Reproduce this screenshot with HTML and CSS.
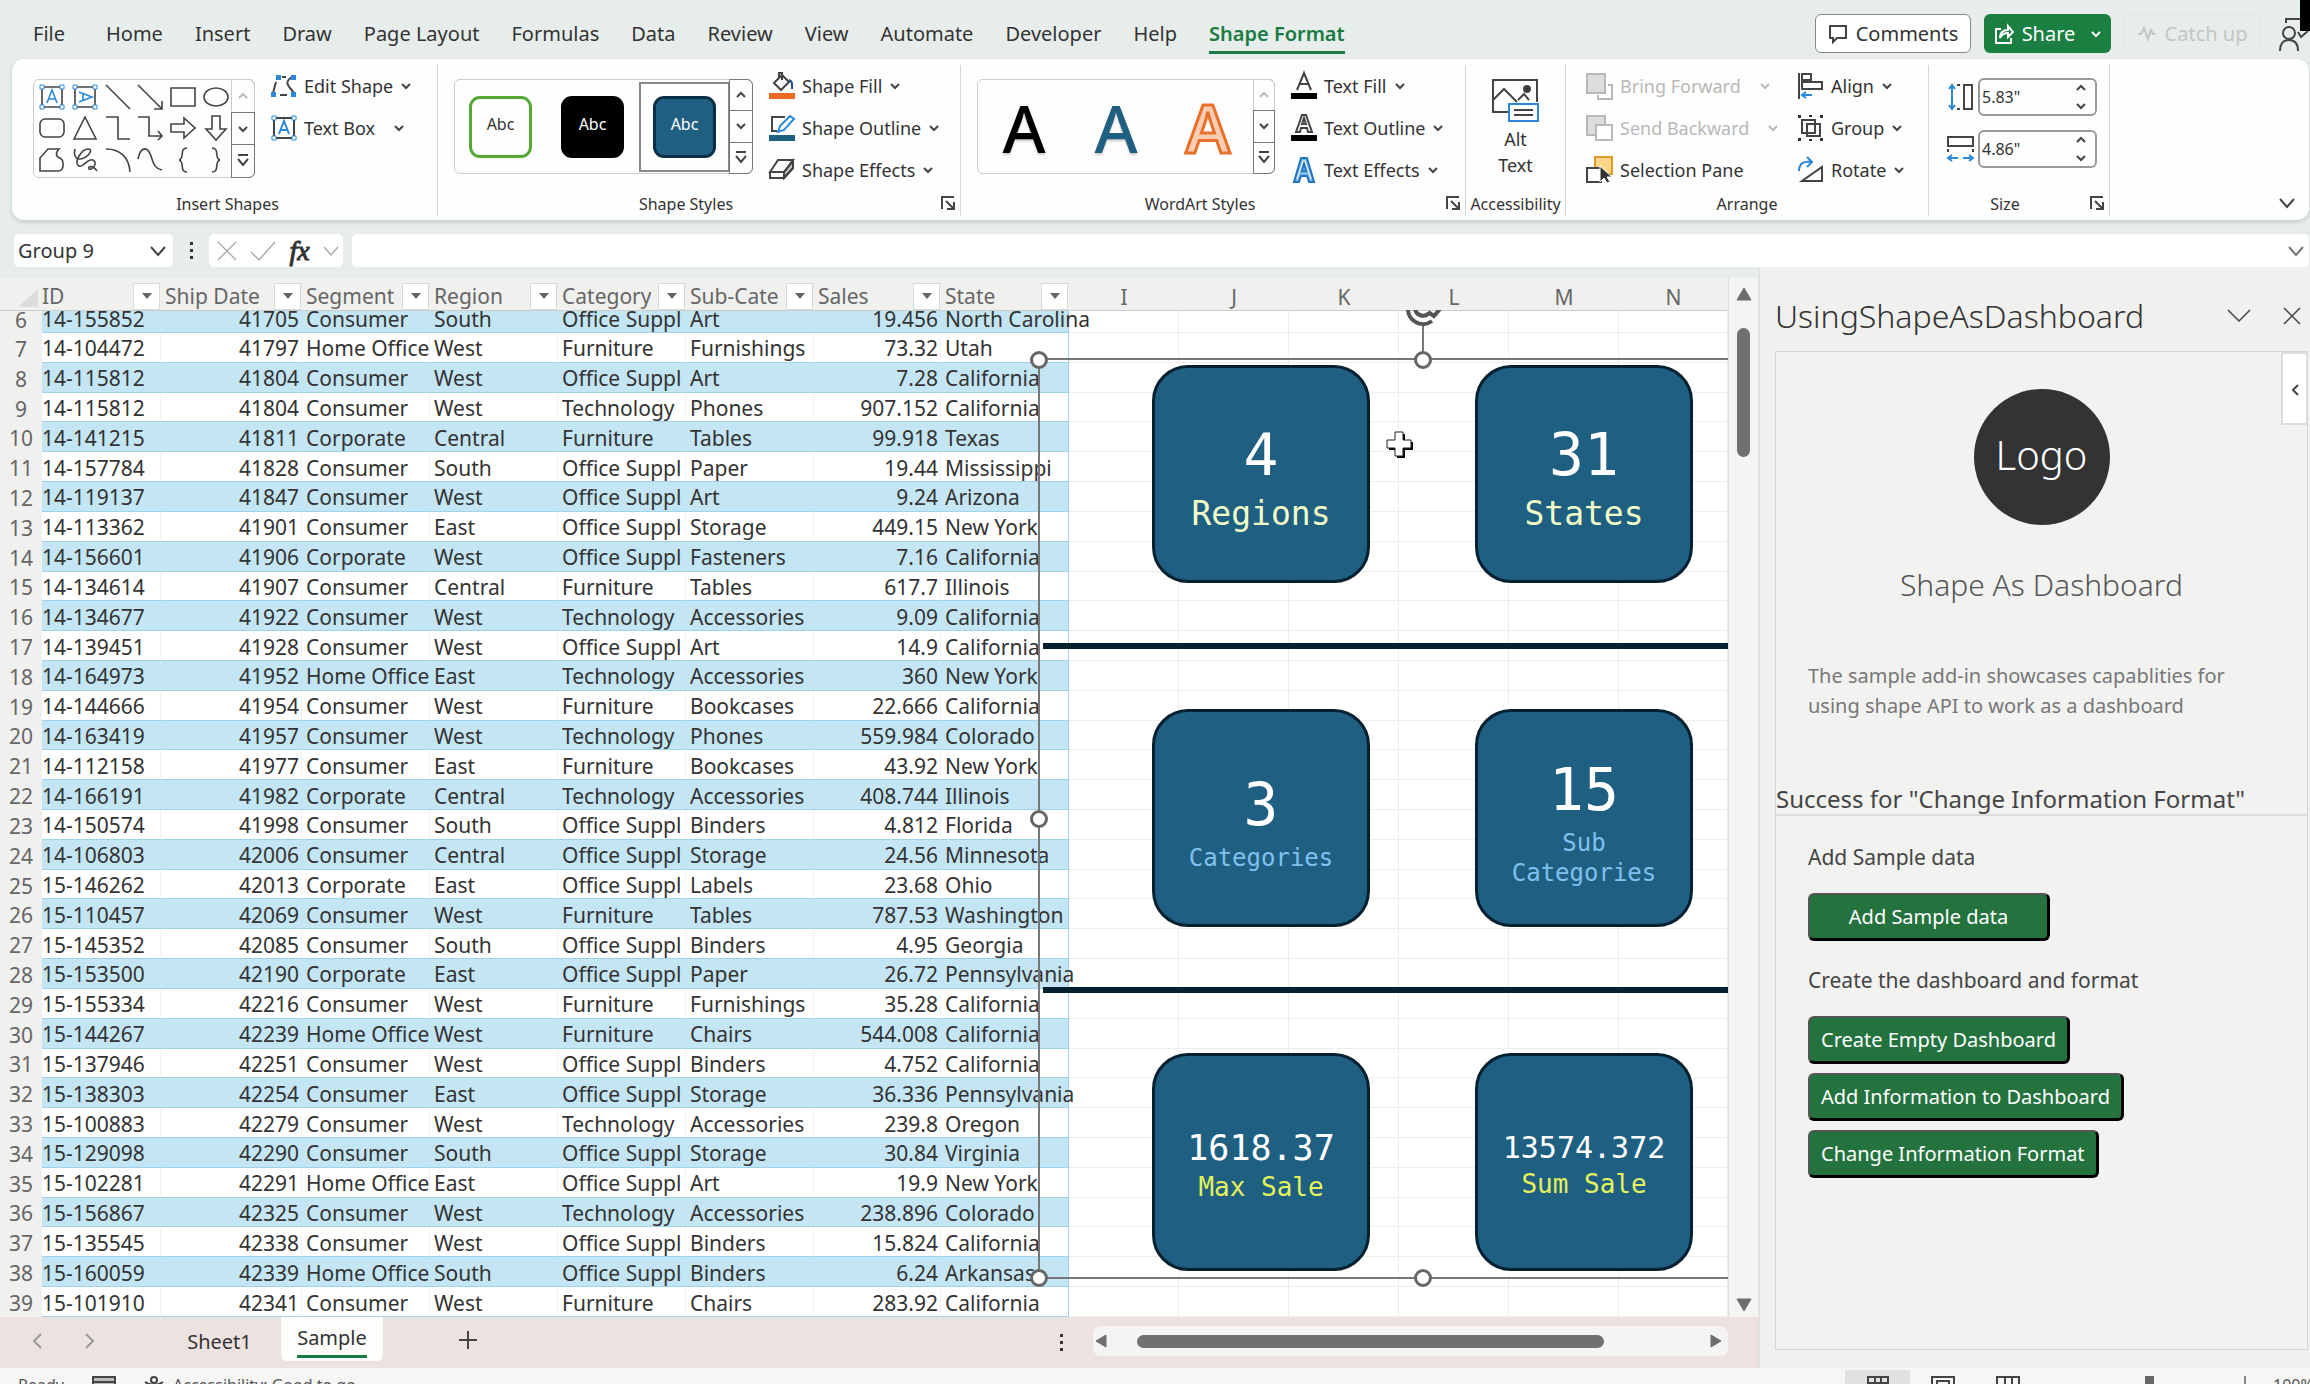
FILE: index.html
```
<!DOCTYPE html>
<html lang="en">
<head>
<meta charset="utf-8">
<title>Sample - Excel</title>
<link rel="stylesheet" href="styles.css">
</head>
<body>
<svg class="defs" aria-hidden="true">
  <symbol id="chev" viewBox="0 0 10 8"><path d="M1 2l4 4 4-4"/></symbol>
  <symbol id="chev-up" viewBox="0 0 10 8"><path d="M1 6l4-4 4 4"/></symbol>
  <symbol id="more" viewBox="0 0 12 16"><path d="M1 2h10M1 6l5 6 5-6"/></symbol>
  <symbol id="launch" viewBox="0 0 14 14"><path d="M1 13V1h12M5 5l8 8M13 6v7H6"/></symbol>
  <symbol id="textbox" viewBox="0 0 26 26"><path d="M3 3h20v20H3z"/><path class="blue" d="M8 19l5-13 5 13M10 15h6"/><path class="dot" d="M1 1h4v4H1zM21 1h4v4h-4zM1 21h4v4H1zM21 21h4v4h-4z"/></symbol>
</svg>
<div class="app">
  <header class="tabs-bar">
    <nav class="tabs">
      <a href="#" class="file">File</a><a href="#">Home</a><a href="#">Insert</a><a href="#">Draw</a><a href="#">Page Layout</a><a href="#">Formulas</a><a href="#">Data</a><a href="#">Review</a><a href="#">View</a><a href="#">Automate</a><a href="#">Developer</a><a href="#">Help</a><a href="#" class="active">Shape Format</a>
    </nav>
    <div class="actions">
      <button class="comments"><svg class="ic" width="20" height="20" viewBox="0 0 20 20"><path d="M2 2h16v12H9l-4 4v-4H2z"/></svg>Comments</button>
      <button class="share"><svg class="ic" width="20" height="22" viewBox="0 0 20 22"><path d="M7 6H2v14h15v-5M6 15c0-6 4-8 8-8V3l5 6-5 5v-4c-4 0-6 1-8 5z"/></svg>Share<svg class="ic chev" width="10" height="8"><use href="#chev"/></svg></button>
      <button class="catch" disabled><svg class="ic" width="20" height="16" viewBox="0 0 20 16"><path d="M1 8h3l3-6 4 11 3-9 2 4h3"/></svg>Catch up</button>
      <button class="person" aria-label="Presenter"><svg class="ic" width="30" height="40" viewBox="0 0 30 40"><circle cx="11" cy="19" r="6"/><path d="M2 37c0-8 4-11 9-11s9 3 9 11M8 9V5h22M20 18l3 5 7-6"/></svg></button>
    </div>
    <span class="corner"></span>
  </header>

  <section class="ribbon">
    <div class="group g-insert">
      <div class="body">
        <div class="gallery shapes">
          <div class="cells" id="shape-cells">
            <button aria-label="Text box"><svg class="ic" width="26" height="26"><use href="#textbox"/></svg></button>
            <button aria-label="Vertical text box"><svg class="ic turned" width="26" height="26"><use href="#textbox"/></svg></button>
            <button aria-label="Line"><svg class="ic" width="26" height="26" viewBox="0 0 26 26"><path d="M1 1l24 24"/></svg></button>
            <button aria-label="Arrow"><svg class="ic" width="26" height="26" viewBox="0 0 26 26"><path d="M1 1l24 24M25 17v8h-8"/></svg></button>
            <button aria-label="Rectangle"><svg class="ic" width="26" height="26" viewBox="0 0 26 26"><path d="M1 4h24v18H1z"/></svg></button>
            <button aria-label="Oval"><svg class="ic" width="26" height="26" viewBox="0 0 26 26"><ellipse cx="13" cy="13" rx="12" ry="9"/></svg></button>
            <button aria-label="Rounded rectangle"><svg class="ic" width="26" height="26" viewBox="0 0 26 26"><rect x="1" y="4" width="24" height="18" rx="5"/></svg></button>
            <button aria-label="Triangle"><svg class="ic" width="26" height="26" viewBox="0 0 26 26"><path d="M13 2l11 22H2z"/></svg></button>
            <button aria-label="Elbow"><svg class="ic" width="26" height="26" viewBox="0 0 26 26"><path d="M1 2h12v22h12"/></svg></button>
            <button aria-label="Elbow arrow"><svg class="ic" width="26" height="26" viewBox="0 0 26 26"><path d="M1 2h11v19h13M21 16l4 5-4 4"/></svg></button>
            <button aria-label="Right arrow"><svg class="ic" width="26" height="26" viewBox="0 0 26 26"><path d="M1 9h13V3l11 10-11 10v-6H1z"/></svg></button>
            <button aria-label="Down arrow"><svg class="ic" width="26" height="26" viewBox="0 0 26 26"><path d="M9 1h8v13h6L13 25 3 14h6z"/></svg></button>
            <button aria-label="Freeform"><svg class="ic" width="26" height="26" viewBox="0 0 26 26"><path d="M1 24V11l8-9h11c-4 4-3 8 1 9 4 2 5 13-2 13z"/></svg></button>
            <button aria-label="Scribble"><svg class="ic" width="26" height="26" viewBox="0 0 26 26"><path d="M3 2c-2 8 2 12 9 9 6-3 9-9 4-9-6 0-15 13-9 17 5 2 8-8 14-6 6 3-2 11-4 9-2-3 4-4 8 2"/></svg></button>
            <button aria-label="Arc"><svg class="ic" width="26" height="26" viewBox="0 0 26 26"><path d="M1 2c14 0 23 8 24 23"/></svg></button>
            <button aria-label="Curve"><svg class="ic" width="26" height="26" viewBox="0 0 26 26"><path d="M1 12C4-2 11 0 14 9c3 10 5 13 11 14"/></svg></button>
            <button aria-label="Left brace"><svg class="ic" width="26" height="26" viewBox="0 0 26 26"><path d="M17 1c-8 0-2 11-8 12 6 1 0 12 8 12"/></svg></button>
            <button aria-label="Right brace"><svg class="ic" width="26" height="26" viewBox="0 0 26 26"><path d="M9 1c8 0 2 11 8 12-6 1 0 12-8 12"/></svg></button>
          </div>
          <div class="spin"><button disabled aria-label="Up"><svg class="ic" width="10" height="8"><use href="#chev-up"/></svg></button><button aria-label="Down"><svg class="ic" width="10" height="8"><use href="#chev"/></svg></button><button aria-label="More"><svg class="ic" width="12" height="16"><use href="#more"/></svg></button></div>
        </div>
        <div class="cmds">
          <button><svg class="ic" width="26" height="24" viewBox="0 0 26 24"><path d="M5 8L2 19M21 3c-9 6-3 9 2 16M11 3h4M9 21h7"/><path class="bluefill" d="M5 1h5v5H5zM20 1h5v5h-5zM0 18h5v5H0zM20 18h5v5h-5z"/></svg>Edit Shape<svg class="ic chev" width="10" height="8"><use href="#chev"/></svg></button>
          <button><svg class="ic" width="26" height="26"><use href="#textbox"/></svg>Text Box<svg class="ic chev far" width="10" height="8"><use href="#chev"/></svg></button>
        </div>
      </div>
      <div class="caption">Insert Shapes</div>
    </div>

    <div class="group g-styles">
      <div class="body">
        <div class="gallery styles">
          <div class="tiles">
            <button class="tile"><span class="abc outline">Abc</span></button>
            <button class="tile"><span class="abc dark">Abc</span></button>
            <button class="tile chosen"><span class="abc teal">Abc</span></button>
          </div>
          <div class="spin"><button aria-label="Up"><svg class="ic" width="10" height="8"><use href="#chev-up"/></svg></button><button aria-label="Down"><svg class="ic" width="10" height="8"><use href="#chev"/></svg></button><button aria-label="More"><svg class="ic" width="12" height="16"><use href="#more"/></svg></button></div>
        </div>
        <div class="cmds">
          <button><svg class="ic" width="26" height="28" viewBox="0 0 26 28"><path d="M5 11l8-8 7 7-8 8zM10 6V1h3v7"/><path class="navy" d="M20 8c4 1 3 5 3 9"/><path fill="#ed6b22" stroke="none" d="M0 21h26v6H0z"/></svg>Shape Fill<svg class="ic chev" width="10" height="8"><use href="#chev"/></svg></button>
          <button><svg class="ic" width="26" height="28" viewBox="0 0 26 28"><path d="M16 3H3v14h5"/><path class="blue" d="M9 18l2-6L21 2l4 3-10 11z"/><path fill="#1f5f82" stroke="none" d="M0 21h26v6H0z"/></svg>Shape Outline<svg class="ic chev" width="10" height="8"><use href="#chev"/></svg></button>
          <button><svg class="ic" width="26" height="24" viewBox="0 0 26 24"><path fill="#c8c8c8" d="M15 20l9-10V3l-9 11z"/><path d="M1 14L9 2h15l-9 12zM1 14v6h14v-6M15 20l9-10V3"/></svg>Shape Effects<svg class="ic chev" width="10" height="8"><use href="#chev"/></svg></button>
        </div>
      </div>
      <div class="caption">Shape Styles<button class="launcher" aria-label="Format shape"><svg class="ic" width="14" height="14"><use href="#launch"/></svg></button></div>
    </div>

    <div class="group g-wordart">
      <div class="body">
        <div class="gallery wordart">
          <div class="tiles">
            <button class="wa black">A</button><button class="wa sea">A</button><button class="wa flame">A</button>
          </div>
          <div class="spin"><button disabled aria-label="Up"><svg class="ic" width="10" height="8"><use href="#chev-up"/></svg></button><button aria-label="Down"><svg class="ic" width="10" height="8"><use href="#chev"/></svg></button><button aria-label="More"><svg class="ic" width="12" height="16"><use href="#more"/></svg></button></div>
        </div>
        <div class="cmds">
          <button><svg class="ic" width="26" height="28" viewBox="0 0 26 28"><path d="M6 18L13 1l7 17M8 12h10"/><path fill="#000" stroke="none" d="M0 21h26v6H0z"/></svg>Text Fill<svg class="ic chev" width="10" height="8"><use href="#chev"/></svg></button>
          <button><svg class="ic" width="26" height="28" viewBox="0 0 26 28"><path d="M5 18L11 1h4l6 17h-4l-1-4h-6l-1 4zM11 10h4l-2-6z"/><path fill="#000" stroke="none" d="M0 21h26v6H0z"/></svg>Text Outline<svg class="ic chev" width="10" height="8"><use href="#chev"/></svg></button>
          <button><svg class="ic" width="26" height="26" viewBox="0 0 26 26"><path class="thick" d="M3 25L10 1h6l7 24h-5l-2-6h-6l-2 6zM11 14h4l-2-7z"/><path class="thin" d="M6 22L12 4h2l6 18"/></svg>Text Effects<svg class="ic chev" width="10" height="8"><use href="#chev"/></svg></button>
        </div>
      </div>
      <div class="caption">WordArt Styles<button class="launcher" aria-label="Format text effects"><svg class="ic" width="14" height="14"><use href="#launch"/></svg></button></div>
    </div>

    <div class="group g-access">
      <div class="body">
        <button class="alt"><svg class="ic" width="50" height="46" viewBox="0 0 50 46"><path d="M17 34H2V2h44v22M2 22l11-11 13 13M27 22l6-6 5 6"/><circle cx="36" cy="11" r="3" fill="#333"/><path class="blue" fill="#fff" d="M18 26h29v17H18z"/><path d="M23 32h19M23 37h19"/></svg><span>Alt</span><span>Text</span></button>
      </div>
      <div class="caption">Accessibility</div>
    </div>

    <div class="group g-arrange">
      <div class="body">
        <div class="cmds">
          <button disabled><svg class="ic" width="27" height="28" viewBox="0 0 27 28"><path fill="#ddd" d="M1 2h18v19H1z"/><path d="M22 13h4v14H12v-4"/></svg>Bring Forward<svg class="ic chev far" width="10" height="8"><use href="#chev"/></svg></button>
          <button disabled><svg class="ic" width="27" height="28" viewBox="0 0 27 28"><path fill="#ddd" d="M1 2h18v19H1z"/><path fill="#fff" d="M10 11h16v15H10z"/></svg>Send Backward<svg class="ic chev far" width="10" height="8"><use href="#chev"/></svg></button>
          <button><svg class="ic" width="27" height="28" viewBox="0 0 27 28"><path fill="#ffd58a" stroke="#e09a2a" d="M9 1h17v17H9z"/><path fill="#fff" d="M1 12h14v14H1z"/><path fill="#333" stroke="#fff" stroke-width="1" d="M14 10v16l4-4 3 5 3-1-3-5h5z"/></svg>Selection Pane</button>
        </div>
        <div class="cmds second">
          <button><svg class="ic" width="27" height="28" viewBox="0 0 27 28"><path d="M2 1v26M5 2h9v6H5zM5 10h20v7H5z"/><path class="blue" d="M15 23H6M9 20l-4 3 4 3"/></svg>Align<svg class="ic chev" width="10" height="8"><use href="#chev"/></svg></button>
          <button><svg class="ic" width="27" height="28" viewBox="0 0 27 28"><path d="M5 6h13v13H5zM10 10h13v12H10z"/><path fill="#333" stroke="none" d="M1 1h3v3H1zM23 1h3v3h-3zM1 24h3v3H1zM23 24h3v3h-3zM12 1h3v2h-3zM12 25h3v2h-3z"/></svg>Group<svg class="ic chev" width="10" height="8"><use href="#chev"/></svg></button>
          <button><svg class="ic" width="27" height="28" viewBox="0 0 27 28"><path d="M5 25h20V11z"/><path class="blue" d="M2 15C2 7 7 5 14 6M10 1l5 5-5 5"/></svg>Rotate<svg class="ic chev" width="10" height="8"><use href="#chev"/></svg></button>
        </div>
      </div>
      <div class="caption">Arrange</div>
    </div>

    <div class="group g-size">
      <div class="body">
        <div class="sizes">
          <label class="size"><svg class="ic" width="27" height="28" viewBox="0 0 27 28"><path d="M17 2h8v24h-8zM10 2h3M10 26h3"/><path class="blue" d="M5 2v24M2 6l3-4 3 4M2 22l3 4 3-4"/></svg><span class="num"><input type="text" value='5.83"' aria-label="Height"><span class="updown"><svg class="ic" width="10" height="8"><use href="#chev-up"/></svg><svg class="ic" width="10" height="8"><use href="#chev"/></svg></span></span></label>
          <label class="size"><svg class="ic" width="27" height="28" viewBox="0 0 27 28"><path d="M1 2h25v9H1zM1 14v3M26 14v3"/><path class="blue" d="M2 23h9M16 23h9M5 20l-4 3 4 3M22 20l4 3-4 3"/></svg><span class="num"><input type="text" value='4.86"' aria-label="Width"><span class="updown"><svg class="ic" width="10" height="8"><use href="#chev-up"/></svg><svg class="ic" width="10" height="8"><use href="#chev"/></svg></span></span></label>
        </div>
      </div>
      <div class="caption">Size<button class="launcher" aria-label="Size and properties"><svg class="ic" width="14" height="14"><use href="#launch"/></svg></button></div>
    </div>
    <button class="collapse" aria-label="Collapse ribbon"><svg class="ic" width="16" height="13" viewBox="0 0 16 13"><path d="M1 3l7 8 7-8"/></svg></button>
  </section>

  <section class="formula-bar">
    <button class="name-box">Group 9<svg class="ic" width="16" height="13" viewBox="0 0 16 13"><path d="M1 3l7 8 7-8"/></svg></button>
    <span class="dots"><i></i><i></i><i></i></span>
    <div class="fx-box">
      <svg class="ic pale" width="20" height="20" viewBox="0 0 20 20"><path d="M1 1l18 18M19 1L1 19"/></svg>
      <svg class="ic pale" width="26" height="20" viewBox="0 0 26 20"><path d="M1 11l8 8L25 1"/></svg>
      <span class="fx">fx</span>
      <svg class="ic pale" width="16" height="13" viewBox="0 0 16 13"><path d="M1 3l7 8 7-8"/></svg>
    </div>
    <div class="formula"><input type="text" aria-label="Formula"><svg class="ic" width="16" height="13" viewBox="0 0 16 13"><path d="M1 3l7 8 7-8"/></svg></div>
  </section>

  <main class="work">
    <div class="book">
      <div class="sheet-row">
        <div class="sheet">
          <table>
            <colgroup><col class="c-head"><col class="c-id"><col class="c-date"><col class="c-mid"><col class="c-mid"><col class="c-mid"><col class="c-mid"><col class="c-sales"><col class="c-mid"><col class="c-std"><col class="c-std"><col class="c-std"><col class="c-std"><col class="c-std"><col></colgroup>
            <thead><tr id="heads"></tr></thead>
            <tbody id="rows"></tbody>
          </table>
          <div class="drawing">
            <div class="board">
              <div class="card a"><p class="n58">4</p><p class="lbl cream">Regions</p></div>
              <div class="card b"><p class="n58">31</p><p class="lbl cream">States</p></div>
              <hr class="r2">
              <div class="card a r3"><p class="n58">3</p><p class="lbl sky">Categories</p></div>
              <div class="card b r3"><p class="n58">15</p><p class="lbl sky">Sub</p><p class="lbl sky">Categories</p></div>
              <hr class="r4">
              <div class="card a r5"><p class="n35">1618.37</p><p class="lbl lime">Max Sale</p></div>
              <div class="card b r5"><p class="n30">13574.372</p><p class="lbl lime">Sum Sale</p></div>
            </div>
            <div class="selection"></div>
            <svg class="rotor" width="40" height="60" viewBox="0 0 40 60"><path d="M20 16v34" stroke="#777" stroke-width="2"/><path fill="none" stroke="#555" stroke-width="4" d="M5-2a15 15 0 0 0 24 13M12-2a8 8 0 0 0 14 5M25 2l6 4 6-7"/></svg>
            <i class="knob k1"></i><i class="knob k2"></i><i class="knob k3"></i><i class="knob k4"></i><i class="knob k5"></i>
            <svg class="cursor" width="28" height="28" viewBox="0 0 28 28"><path fill="#000" d="M11 3h8v8h8v8h-8v8h-8v-8H3v-8h8z"/><path fill="#fff" stroke="#222" stroke-width="1" d="M9 1h8v8h8v8h-8v8H9v-8H1V9h8z"/></svg>
          </div>
        </div>
        <div class="vscroll"><svg width="16" height="14" viewBox="0 0 16 14"><path d="M8 1l7 12H1z"/></svg><span class="thumb"></span><span class="space"></span><svg width="16" height="14" viewBox="0 0 16 14"><path d="M8 13L1 1h14z"/></svg></div>
      </div>
      <div class="sheet-tabs">
        <div class="nav"><svg class="ic" width="10" height="16" viewBox="0 0 10 16"><path d="M9 1L2 8l7 7"/></svg><svg class="ic" width="10" height="16" viewBox="0 0 10 16"><path d="M1 1l7 7-7 7"/></svg></div>
        <button class="stab">Sheet1</button>
        <button class="stab on"><span>Sample</span></button>
        <button class="add" aria-label="New sheet"><svg class="ic" width="18" height="18" viewBox="0 0 18 18"><path d="M9 0v18M0 9h18"/></svg></button>
        <span class="dots"><i></i><i></i><i></i></span>
        <div class="hscroll"><svg width="12" height="14" viewBox="0 0 12 14"><path d="M1 7l10-6v12z"/></svg><span class="thumb"></span><svg width="12" height="14" viewBox="0 0 12 14"><path d="M11 7L1 1v12z"/></svg></div>
      </div>
    </div>

    <aside class="pane">
      <div class="pane-head"><h2>UsingShapeAsDashboard</h2><button aria-label="Options"><svg class="ic" width="24" height="16" viewBox="0 0 24 16"><path d="M1 2l11 11L23 2"/></svg></button><button aria-label="Close"><svg class="ic" width="18" height="18" viewBox="0 0 18 18"><path d="M1 1l16 16M17 1L1 17"/></svg></button></div>
      <div class="frame">
        <button class="flap" aria-label="Expand"><svg class="ic" width="8" height="12" viewBox="0 0 8 12"><path d="M7 1L2 6l5 5"/></svg></button>
        <div class="intro">
          <div class="logo">Logo</div>
          <h3>Shape As Dashboard</h3>
          <p class="about">The sample add-in showcases capablities for<br>using shape API to work as a dashboard</p>
        </div>
        <p class="status-line">Success for "Change Information Format"</p>
        <div class="steps">
          <p>Add Sample data</p>
          <button class="wide">Add Sample data</button>
          <p>Create the dashboard and format</p>
          <button>Create Empty Dashboard</button>
          <button>Add Information to Dashboard</button>
          <button>Change Information Format</button>
        </div>
      </div>
    </aside>
  </main>

  <footer class="status">
    <span class="ready">Ready</span>
    <svg class="ic" width="24" height="20" viewBox="0 0 24 20"><path fill="#bbb" d="M1 1h22v18H1zM1 6h22M5 10h14"/></svg>
    <svg class="ic a11y" width="22" height="22" viewBox="0 0 22 22"><circle cx="11" cy="4" r="3"/><path d="M2 6c6 4 12 4 18 0M8 9v6l-3 6M14 9v6l3 6"/></svg>
    <span class="good">Accessibility: Good to go</span>
    <span class="view on"><svg class="ic" width="22" height="20" viewBox="0 0 22 20"><path d="M1 1h20v18H1zM8 1v18M14 1v18M1 7h20M1 13h20"/></svg></span>
    <span class="view"><svg class="ic" width="24" height="20" viewBox="0 0 24 20"><path d="M1 1h22v18H1zM6 5h12v14H6zM9 9h6M9 13h6"/></svg></span>
    <span class="view"><svg class="ic" width="24" height="20" viewBox="0 0 24 20"><path d="M1 1h22v18H1zM9 1v12M16 1v12M1 13h22"/></svg></span>
    <span class="zoom-knob"></span>
    <span class="zoom-plus"></span>
    <span class="pct">100%</span>
  </footer>
</div>
<script src="sheet.js"></script>
</body>
</html>
```
FILE: sheet.js
```
const heads = ["ID", "Ship Date", "Segment", "Region", "Category", "Sub-Cate", "Sales", "State"];
const letters = ["I", "J", "K", "L", "M", "N"];
const S = { C: "Consumer", H: "Home Office", P: "Corporate" };
const R = { S: "South", W: "West", C: "Central", E: "East" };
const G = { O: "Office Suppl", F: "Furniture", T: "Technology" };
const data = `14-155852,41705,CSO,Art,19.456,North Carolina
14-104472,41797,HWF,Furnishings,73.32,Utah
14-115812,41804,CWO,Art,7.28,California
14-115812,41804,CWT,Phones,907.152,California
14-141215,41811,PCF,Tables,99.918,Texas
14-157784,41828,CSO,Paper,19.44,Mississippi
14-119137,41847,CWO,Art,9.24,Arizona
14-113362,41901,CEO,Storage,449.15,New York
14-156601,41906,PWO,Fasteners,7.16,California
14-134614,41907,CCF,Tables,617.7,Illinois
14-134677,41922,CWT,Accessories,9.09,California
14-139451,41928,CWO,Art,14.9,California
14-164973,41952,HET,Accessories,360,New York
14-144666,41954,CWF,Bookcases,22.666,California
14-163419,41957,CWT,Phones,559.984,Colorado
14-112158,41977,CEF,Bookcases,43.92,New York
14-166191,41982,PCT,Accessories,408.744,Illinois
14-150574,41998,CSO,Binders,4.812,Florida
14-106803,42006,CCO,Storage,24.56,Minnesota
15-146262,42013,PEO,Labels,23.68,Ohio
15-110457,42069,CWF,Tables,787.53,Washington
15-145352,42085,CSO,Binders,4.95,Georgia
15-153500,42190,PEO,Paper,26.72,Pennsylvania
15-155334,42216,CWF,Furnishings,35.28,California
15-144267,42239,HWF,Chairs,544.008,California
15-137946,42251,CWO,Binders,4.752,California
15-138303,42254,CEO,Storage,36.336,Pennsylvania
15-100883,42279,CWT,Accessories,239.8,Oregon
15-129098,42290,CSO,Storage,30.84,Virginia
15-102281,42291,HEO,Art,19.9,New York
15-156867,42325,CWT,Accessories,238.896,Colorado
15-135545,42338,CWO,Binders,15.824,California
15-160059,42339,HSO,Binders,6.24,Arkansas
15-101910,42341,CWF,Chairs,283.92,California`.split("\n");

document.getElementById("heads").innerHTML =
  '<th class="corner-cell"><svg width="20" height="18" viewBox="0 0 20 18"><path d="M20 0v18H0z"/></svg></th>' +
  heads.map(h => `<th><div class="th"><span>${h}</span><button aria-label="Filter ${h}"><svg width="10" height="6" viewBox="0 0 10 6"><path d="M0 0h10L5 6z"/></svg></button></div></th>`).join("") +
  letters.map(l => `<th class="letter">${l}</th>`).join("");

document.getElementById("rows").innerHTML = data.map((line, i) => {
  const [id, date, code, sub, sales, state] = line.split(",");
  return `<tr><th>${i + 6}</th><td class="id">${id}</td><td class="num-cell">${date}</td><td>${S[code[0]]}</td><td>${R[code[1]]}</td><td>${G[code[2]]}</td><td>${sub}</td><td class="num-cell">${sales}</td><td class="state">${state}</td>` +
    '<td class="blank"></td>'.repeat(6) + "</tr>";
}).join("");
```
FILE: styles.css
```
* { box-sizing: border-box; }
html, body { height: 100%; margin: 0; overflow: hidden; }
body { font-family: "Noto Sans", "Open Sans", sans-serif; font-size: 18px; color: #333; background: #e7edeb; }
button, input { font: inherit; color: inherit; background: none; border: 0; padding: 0; margin: 0; }
p, h2, h3 { margin: 0; font-weight: 400; }
a { color: inherit; text-decoration: none; }
.defs { display: none; }
.ic { fill: none; stroke: #444; stroke-width: 2; flex: none; overflow: visible; }
.ic .blue, .blue { stroke: #2b88d8; }
.dot { fill: #fff; stroke: #2b88d8; stroke-width: 1; }
.bluefill { fill: #2b88d8; stroke: none; }
.navy { stroke: #1f4e8c; }
.thick { fill: #7fb8ec; stroke: #2173c4; stroke-width: 2; }
.thin { stroke: #fff; stroke-width: 1; }
.turned { transform: rotate(90deg); }
.app { height: 100%; display: flex; flex-direction: column; }

/* tabs */
.tabs-bar { position: relative; flex: none; display: flex; justify-content: space-between; height: 59px; padding-left: 33px; }
.tabs { display: flex; gap: 32px; font-size: 20px; line-height: 32px; padding-top: 18px; white-space: nowrap; }
.tabs a { height: 36px; }
.tabs .file { margin-right: 9px; }
.tabs .active { color: #1a7a43; font-weight: 600; border-bottom: 3px solid #1a7a43; }
.actions { display: flex; gap: 13px; font-size: 20px; padding-top: 14px; }
.actions button { height: 39px; display: flex; align-items: center; justify-content: center; gap: 8px; border-radius: 6px; white-space: nowrap; }
.actions .comments { width: 156px; background: #fff; border: 1px solid #888; }
.actions .share { width: 127px; background: #1b7f41; color: #fff; }
.share .ic { stroke: #fff; }
.share .chev { margin-left: 8px; }
.actions .catch { width: 136px; color: #c4c6c6; border: 1px solid #e2e6e5; }
.catch .ic { stroke: #c4c6c6; }
.actions .person { width: 37px; padding-left: 5px; justify-content: flex-start; overflow: hidden; }
.corner { position: absolute; right: 0; top: 0; width: 10px; height: 31px; background: #000; }

/* ribbon */
.ribbon { flex: none; display: grid; grid-template-columns: 426px 523px 505px 100px 363px 181px 1fr; margin: 0 1px 0 12px; height: 161px; background: #fefefe; border-radius: 12px; box-shadow: 0 2px 4px #c4cac8; }
.group { display: flex; flex-direction: column; margin: 6px 0 9px; border-right: 1px solid #d6d6d6; }
.body { display: flex; height: 124px; align-items: flex-start; }
.caption { position: relative; font-size: 16px; line-height: 24px; padding-top: 3px; text-align: center; white-space: nowrap; }
.g-insert .caption { padding-left: 6px; }
.g-styles .caption, .g-wordart .caption { padding-right: 26px; }
.g-size .caption { padding-right: 28px; }
.launcher { position: absolute; right: 5px; top: 7px; width: 14px; height: 14px; line-height: 0; }
.gallery { display: flex; margin-top: 14px; border: 1px solid #ccc; border-radius: 6px; height: 95px; }
.spin { display: flex; flex-direction: column; width: 24px; margin: -1px; }
.spin button { flex: 1; display: flex; align-items: center; justify-content: center; border: 1px solid #777; margin-top: -1px; }
.spin button:first-child { margin-top: 0; border-top-right-radius: 6px; }
.spin button:last-child { border-bottom-right-radius: 6px; }
.spin button:disabled { border-color: #ccc; }
.spin button:disabled .ic { stroke: #bbb; }
.shapes { width: 222px; margin-left: 21px; height: 99px; }
.cells { flex: 1; display: grid; grid-template-columns: repeat(6, 1fr); grid-template-rows: repeat(3, 1fr); padding: 1px 0 1px 2px; }
.cells button { display: grid; place-items: center; }
.cells .ic { stroke-width: 1.6; }
.cmds { display: flex; flex-direction: column; margin-left: 16px; }
.cmds button { display: flex; align-items: center; height: 42px; gap: 7px; white-space: nowrap; }
.cmds .chev { margin-left: 1px; }
.cmds .far { margin-left: 12px; }
.cmds button:disabled { color: #b8b8b8; }
.cmds button:disabled .ic { stroke: #b8b8b8; }
.styles { width: 299px; margin-left: 16px; }
.tiles { flex: 1; display: flex; align-items: center; justify-content: space-between; }
.tile { width: 91px; height: 90px; display: grid; place-items: center; }
.chosen { border: 2px solid #888; }
.abc { width: 63px; height: 62px; border-radius: 11px; font-size: 16px; line-height: 50px; border: 3px solid #55a833; text-align: center; }
.dark { background: #000; border-color: #000; color: #fff; }
.teal { background: #1f5f82; border-color: #0b2f45; color: #fff; }
.wordart { width: 298px; margin-left: 16px; }
.wa { width: 92px; font-size: 66px; line-height: 90px; height: 92px; font-weight: 500; text-align: center; text-shadow: 0 2px 2px #ccc; }
.black { color: #000; }
.sea { color: #1f5f82; }
.flame { color: #f9cdb4; -webkit-text-stroke: 3px #e8702a; font-weight: 600; text-shadow: none; }
.alt { width: 100%; display: flex; flex-direction: column; align-items: center; padding-top: 13px; line-height: 26px; }
.alt .ic { margin-bottom: 2px; }
.g-arrange .cmds { margin-left: 20px; width: 191px; }
.g-arrange .second { width: auto; }
.sizes { display: flex; flex-direction: column; gap: 14px; padding: 13px 0 0 18px; }
.size { display: flex; align-items: center; gap: 4px; }
.num { display: flex; align-items: center; width: 119px; height: 38px; border: 2px solid #999; border-radius: 6px; padding: 0 9px 0 2px; font-size: 16px; }
.num input { flex: 1; min-width: 0; }
.updown { display: flex; flex-direction: column; gap: 10px; }
.collapse { align-self: end; justify-self: end; margin: 0 14px 16px 0; line-height: 0; }

/* formula bar */
.formula-bar { flex: none; display: flex; margin: 14px 1px 0 14px; height: 33px; }
.formula-bar > div, .name-box { background: #fff; border-radius: 5px; }
.name-box { width: 159px; display: flex; align-items: center; justify-content: space-between; padding: 0 7px 0 4px; font-size: 20px; }
.dots { display: flex; flex-direction: column; align-items: center; justify-content: center; gap: 4px; width: 36px; }
.dots i { width: 3px; height: 3px; background: #333; }
.fx-box { width: 134px; display: flex; align-items: center; justify-content: space-between; padding: 0 4px 0 8px; }
.ic.pale { stroke: #aaa; stroke-width: 1.4; }
.fx { font: italic 28px/32px "Liberation Serif", serif; -webkit-text-stroke: 1px #333; }
.formula { flex: 1; margin-left: 9px; display: flex; align-items: center; padding-right: 5px; }
.formula input { flex: 1; }
.formula .ic { stroke: #777; }

/* work area */
.work { flex: 1; min-height: 0; display: flex; }
.book { flex: 1; min-width: 0; display: flex; flex-direction: column; border-right: 2px solid #e2e2e2; }
.sheet-row { flex: 1; min-height: 0; display: flex; padding-top: 11px; }
.sheet { position: relative; flex: 1; min-width: 0; overflow: hidden; background: #fff; }
table { width: 100%; height: 100%; table-layout: fixed; border-collapse: separate; border-spacing: 0; font-size: 21px; white-space: nowrap; }
.c-head { width: 42px; }
.c-id { width: 119px; }
.c-date { width: 141px; }
.c-mid { width: 128px; }
.c-sales { width: 127px; }
.c-std { width: 110px; }
th { font-weight: 400; color: #666; background: #f0f0ef; padding: 0; overflow: hidden; }
thead th { height: 32px; text-align: left; border-bottom: 1px solid #ccc; }
.corner-cell { text-align: right; line-height: 0; vertical-align: bottom; }
.corner-cell svg { fill: #ddd; margin: 0 4px 3px 0; }
.th { display: flex; align-items: center; justify-content: space-between; height: 31px; padding: 4px 1px 0 4px; }
th:nth-child(2) .th { padding-left: 0; }
.th span { overflow: hidden; line-height: 27px; padding-top: 1px; }
.th button { flex: none; width: 27px; height: 27px; background: #fff; border: 1px solid #d4dcd8; display: grid; place-items: center; }
.th svg { fill: #666; }
thead .letter { text-align: center; line-height: 26px; padding-top: 6px; }
tbody th { text-align: center; line-height: 24px; padding-top: 2px; }
td { padding: 2px 4px 0; line-height: 24px; overflow: hidden; border-bottom: 1px solid #9fd3ec; border-right: 1px solid #f0f2f2; }
tbody tr:nth-child(odd) td:not(.blank) { background: #c3e5f4; border-right-color: #c3e5f4; }
tbody tr td.state.state { overflow: visible; border-right-color: #9fd3ec; }
td.id { padding-left: 0; }
td.num-cell { text-align: right; padding-right: 2px; }
td.blank { border-color: #ededeb; }
tbody tr:first-child > * { height: 22px; line-height: 16px; padding-top: 0; padding-bottom: 5px; }

/* shapes over the cells */
.drawing { position: absolute; inset: 32px 0 0 0; overflow: hidden; }
.board { position: absolute; left: 1043px; right: 0; top: 55px; display: grid; grid-template-columns: 109px 218px 105px 218px 1fr; grid-template-rows: 218px 126px 218px 126px 218px; }
.card { grid-row: 1; display: flex; flex-direction: column; justify-content: center; padding-top: 3px; text-align: center; background: #1f5f82; border: 3px solid #05202f; border-radius: 36px; color: #fff; font-family: "DejaVu Sans Mono", monospace; }
.a { grid-column: 2; }
.b { grid-column: 4; }
.r3 { grid-row: 3; }
.r5 { grid-row: 5; }
hr { grid-column: 1 / -1; width: 100%; height: 6px; margin: 0; border: 0; background: #05202f; align-self: center; }
.r2 { grid-row: 2; }
.r4 { grid-row: 4; }
.n58 { font-size: 58px; line-height: 76px; }
.n35 { font-size: 35px; line-height: 46px; }
.n30 { font-size: 30px; line-height: 40px; }
.cream { font-size: 33px; line-height: 42px; color: #f2ffc8; }
.sky { font-size: 24px; line-height: 30px; color: #7fc1ee; }
.lime { font-size: 26px; line-height: 32px; color: #e4f25c; }
.selection { position: absolute; left: 1038px; right: -4px; top: 48px; height: 921px; border: 2px solid #777; }
.knob { position: absolute; width: 18px; height: 18px; margin: -9px; border: 3px solid #666; border-radius: 50%; background: #fff; }
.k1 { left: 1039px; top: 50px; }
.k2 { left: 1423px; top: 50px; }
.k3 { left: 1039px; top: 509px; }
.k4 { left: 1039px; top: 968px; }
.k5 { left: 1423px; top: 968px; }
.rotor { position: absolute; left: 1403px; top: 0; }
.cursor { position: absolute; left: 1386px; top: 121px; }

/* scroll bars */
.vscroll { width: 30px; background: #f4f4f3; border-left: 1px solid #ddd; display: flex; flex-direction: column; align-items: center; padding: 9px 0 5px; }
.vscroll svg, .hscroll svg { fill: #6e6e6e; stroke: #6e6e6e; stroke-linejoin: round; flex: none; }
.vscroll .thumb { flex: 13 0 0; width: 13px; margin-top: 27px; border-radius: 7px; background: #707070; }
.vscroll .space { flex: 85 0 0; }
.sheet-tabs { flex: none; height: 51px; display: flex; align-items: flex-start; background: #ece3e1; font-size: 20px; }
.nav { display: flex; gap: 43px; align-items: center; height: 48px; padding-left: 32px; width: 162px; }
.nav .ic { stroke: #999; }
.stab { height: 49px; width: 115px; }
.stab.on { width: 102px; height: 44px; margin-left: 4px; background: #fdfdfc; border-radius: 0 0 6px 6px; line-height: 34px; }
.stab.on span { display: inline-block; border-bottom: 3px solid #1a7a43; }
.add { width: 18px; height: 48px; margin-left: 76px; }
.sheet-tabs .dots { height: 50px; margin-left: auto; width: 60px; }
.hscroll { width: 635px; height: 30px; margin: 9px 30px 0 2px; border-radius: 8px; background: #f5f4f2; display: flex; align-items: center; padding: 0 6px 0 2px; }
.hscroll .thumb { width: 467px; height: 13px; border-radius: 7px; background: #707070; margin: 0 auto 0 30px; }

/* add-in pane */
.pane { flex: none; width: 550px; background: #f0f0ef; padding: 14px 2px 18px 15px; display: flex; flex-direction: column; }
.pane-head { display: flex; align-items: center; height: 70px; padding: 0 7px 0 0; gap: 32px; }
.pane-head button { line-height: 0; }
.pane-head h2 { flex: 1; font-size: 32px; font-weight: 300; line-height: 44px; }
.pane-head .ic { stroke-width: 1.5; }
.frame { position: relative; flex: 1; background: #f2f2f1; border: 1px solid #d4d4d4; display: flex; flex-direction: column; }
.flap { position: absolute; right: -1px; top: 0; width: 27px; height: 73px; background: #fff; border: 2px solid #ddd; }
.intro { height: 464px; border-bottom: 2px solid #ddd; padding-top: 37px; display: flex; flex-direction: column; align-items: center; font-weight: 300; color: #555; }
.logo { width: 136px; height: 136px; border-radius: 50%; background: #333335; color: #fff; font-size: 40px; line-height: 132px; text-align: center; }
h3 { font-size: 30px; font-weight: 300; line-height: 40px; margin-top: 40px; }
.about { align-self: stretch; padding-left: 32px; margin-top: 56px; font-size: 20px; line-height: 30px; color: #777; white-space: nowrap; }
.status-line { font-size: 24px; line-height: 32px; margin-top: -33px; white-space: nowrap; color: #444; }
.steps { display: flex; flex-direction: column; align-items: flex-start; gap: 9px; padding: 27px 0 0 32px; }
.steps p { font-size: 21px; line-height: 30px; margin-bottom: 12px; color: #444; }
.steps button { height: 48px; padding: 0 11px; background: #24733f; color: #fff; font-size: 20px; border: 2px solid #555; border-right: 3px solid #000; border-bottom: 3px solid #000; border-radius: 6px; white-space: nowrap; }
.steps .wide { width: 242px; margin-bottom: 15px; }

/* status bar */
.status { flex: none; height: 16px; overflow: hidden; display: flex; align-items: flex-start; background: #f6f6f4; padding: 8px 0 0 18px; font-size: 16px; line-height: 18px; color: #555; white-space: nowrap; }
.status .ready { width: 74px; }
.status .a11y { margin: 0 8px 0 27px; }
.good { flex: 1; }
.view { width: 65px; height: 24px; display: flex; justify-content: center; }
.view.on { background: #e2e0e1; margin-top: -6px; padding-top: 6px; }
.zoom-knob { width: 9px; height: 20px; background: #666; margin-left: 105px; }
.zoom-plus { width: 2px; height: 14px; background: #888; margin-left: 90px; }
.pct { width: 37px; margin-left: 27px; overflow: hidden; }
```
